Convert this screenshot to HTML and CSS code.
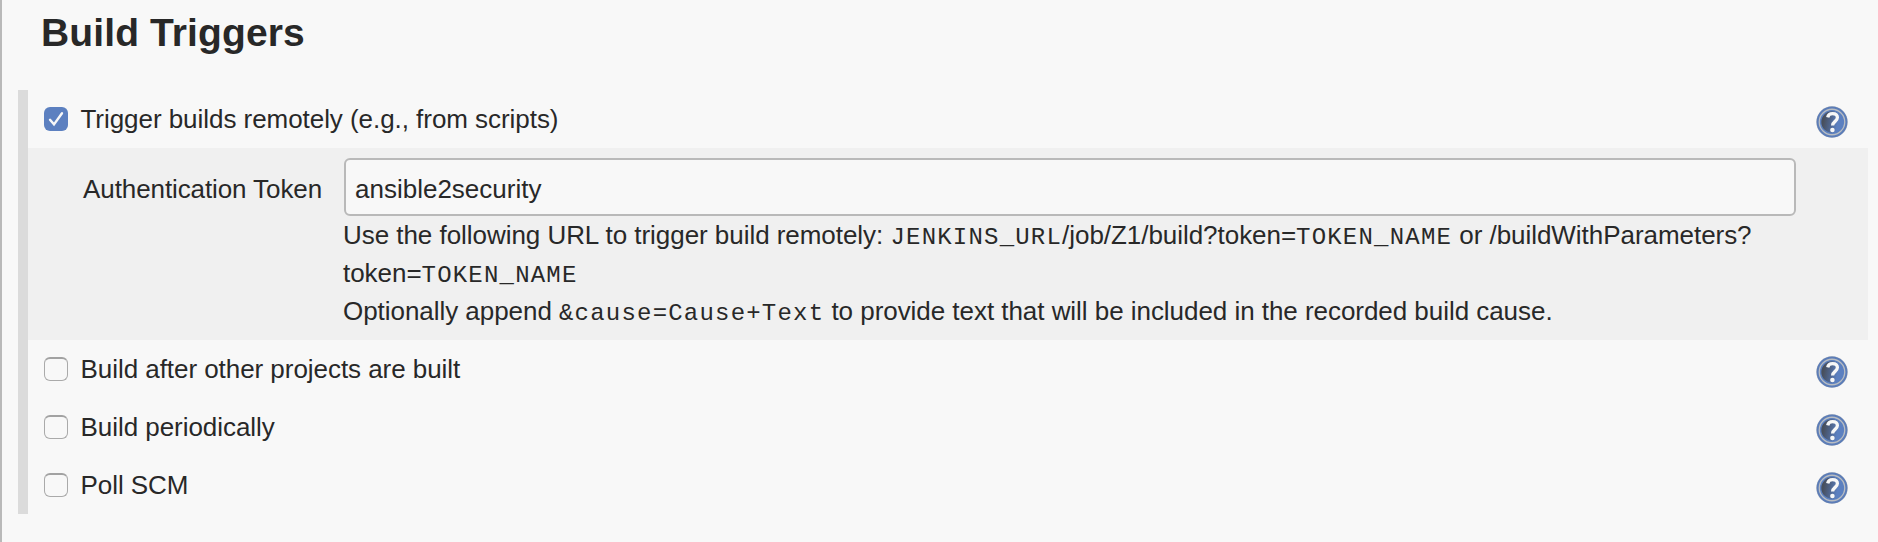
FILE: index.html
```html
<!DOCTYPE html>
<html lang="en">
<head>
<meta charset="utf-8">
<title>Build Triggers</title>
<link rel="stylesheet" href="styles.css">
</head>
<body>
<svg class="defs" width="0" height="0" aria-hidden="true">
  <defs>
    <linearGradient id="ball" x1="0" y1="0.4" x2="1" y2="0.6">
      <stop offset="0.12" stop-color="#484f5c"/>
      <stop offset="0.4" stop-color="#4e6287"/>
      <stop offset="0.75" stop-color="#5c80c0"/>
    </linearGradient>
    <symbol id="help" viewBox="0 0 32 32">
      <circle cx="16" cy="16" r="15.7" fill="#b2b6bc"/>
      <circle cx="16" cy="16" r="14.4" fill="#b9bdc2" stroke="#5c7db8" stroke-width="2"/>
      <circle cx="16" cy="16" r="11.4" fill="url(#ball)" stroke="#5c80c0" stroke-width="1.4"/>
      <path d="M11.7 11.4C12.3 8.6 14.2 7.6 16.5 7.6c3 0 4.9 1.6 4.9 4 0 3.7-4.8 3.9-4.8 8" fill="none" stroke="#f7f7f7" stroke-width="3.3"/>
      <circle cx="16.4" cy="24" r="2.3" fill="#f7f7f7"/>
    </symbol>
  </defs>
</svg>
<main class="config">
  <h1 class="title">Build Triggers</h1>
  <section class="triggers">
    <div class="row">
      <span class="check checked"><svg viewBox="0 0 24 24"><path d="M6 12.8l4 4.6L18 6.2"/></svg></span>
      <span class="name">Trigger builds remotely (e.g., from scripts)</span>
      <svg class="help"><use href="#help"/></svg>
    </div>
    <div class="panel">
      <label class="label" for="token">Authentication Token</label>
      <div class="field">
        <input class="input" id="token" type="text" value="ansible2security">
        <div class="hint"><div class="line">Use the following URL to trigger build remotely: <code>JENKINS_URL</code>/job/Z1/build?token=<code>TOKEN_NAME</code> or /buildWithParameters?</div><div class="line">token=<code>TOKEN_NAME</code></div><div class="line">Optionally append <code>&amp;cause=Cause+Text</code> to provide text that will be included in the recorded build cause.</div></div>
      </div>
    </div>
    <div class="row">
      <span class="check"></span>
      <span class="name">Build after other projects are built</span>
      <svg class="help"><use href="#help"/></svg>
    </div>
    <div class="row">
      <span class="check"></span>
      <span class="name">Build periodically</span>
      <svg class="help"><use href="#help"/></svg>
    </div>
    <div class="row">
      <span class="check"></span>
      <span class="name">Poll SCM</span>
      <svg class="help"><use href="#help"/></svg>
    </div>
  </section>
</main>
</body>
</html>
```
FILE: styles.css
```css
* { box-sizing: border-box; }
body {
  margin: 0;
  background: #f8f8f8;
  color: #282828;
  font: 26px/38px "Liberation Sans", Arial, sans-serif;
}
.defs { display: block; }
.config {
  height: 542px;
  border-left: 2px solid #b9b9b9;
  padding: 0 10px 0 16px;
  overflow: hidden;
}
.title {
  height: 90px;
  margin: 0;
  padding: 10px 0 0 23px;
  font-size: 39px;
  line-height: 45px;
  font-weight: bold;
  letter-spacing: 0.12px;
}
.triggers { border-left: 10px solid #dbdbdb; }
.row {
  display: flex;
  align-items: center;
  height: 58px;
  padding: 0 20px 0 16px;
}
.name { flex: 1; margin-left: 12.5px; letter-spacing: -0.05px; }
.check {
  width: 24px;
  height: 24px;
  border: 1px solid #aaa;
  border-top: 2px solid #a2a2a2;
  border-radius: 6px;
}
.checked { border: 0; background: #5c80c0; }
.checked svg { display: block; width: 24px; height: 24px; }
.checked path { fill: none; stroke: #f8f8f8; stroke-width: 2.4; stroke-linecap: round; }
.help { width: 32px; height: 32px; margin-top: 6px; }
.panel {
  display: grid;
  grid-template-columns: 294px 1452px;
  column-gap: 22px;
  height: 192px;
  padding-top: 10px;
  background: #f0f0f0;
}
.label {
  padding-top: 12px;
  text-align: right;
  white-space: nowrap;
  letter-spacing: -0.1px;
}
.input {
  display: block;
  width: 100%;
  height: 58px;
  padding: 4px 9px 0;
  border: 2px solid #b9b9b9;
  border-radius: 6px;
  background: #f8f8f8;
  color: #282828;
  font: inherit;
  outline: none;
}
.hint { margin-left: -1px; white-space: nowrap; letter-spacing: -0.045px; }
.line { height: 38px; }
code {
  font: 24px/1 "Courier New", "Liberation Mono", monospace;
  letter-spacing: 1.2px;
}
```
